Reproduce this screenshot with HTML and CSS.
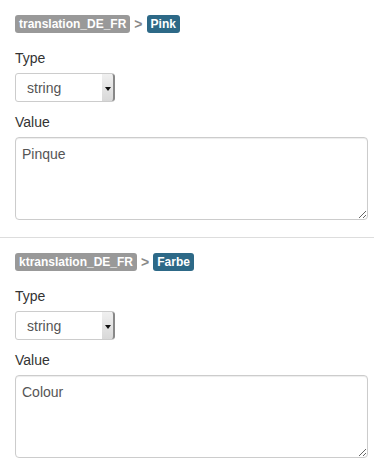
FILE: index.html
```html
<!DOCTYPE html>
<html lang="en">
<head>
<meta charset="UTF-8" />
<meta name="viewport" content="width=device-width, initial-scale=1" />
<title>Translations</title>
<link rel="stylesheet" href="styles.css">
</head>
<body>
<div class="entry">
  <div class="crumbs">
    <span class="tag tag-grey">translation_DE_FR</span>
    <span class="sep">&gt;</span>
    <span class="tag tag-blue">Pink</span>
  </div>

  <label class="field-label" for="type1">Type</label>
  <div class="select-wrap">
    <select id="type1" class="type-select">
      <option>string</option>
    </select>
    <span class="select-btn"><span class="caret"></span></span>
  </div>

  <label class="field-label" for="value1">Value</label>
  <textarea id="value1" class="value-box">Pinque</textarea>
</div>

<hr class="divider">

<div class="entry">
  <div class="crumbs">
    <span class="tag tag-grey">ktranslation_DE_FR</span>
    <span class="sep">&gt;</span>
    <span class="tag tag-blue">Farbe</span>
  </div>

  <label class="field-label" for="type2">Type</label>
  <div class="select-wrap">
    <select id="type2" class="type-select">
      <option>string</option>
    </select>
    <span class="select-btn"><span class="caret"></span></span>
  </div>

  <label class="field-label" for="value2">Value</label>
  <textarea id="value2" class="value-box">Colour</textarea>
</div>
</body>
</html>
```

FILE: styles.css
```css
body {
  margin: 0;
  font-family: "Liberation Sans", Arial, sans-serif;
  font-size: 14px;
  line-height: 20px;
  color: #333;
  background: #fff;
}
.entry {
  padding: 15px 15px 0;
}
.crumbs {
  display: flex;
  align-items: center;
  gap: 4px;
  height: 18px;
  margin-bottom: 15px;
}
.tag {
  display: inline-block;
  height: 18px;
  line-height: 18px;
  padding: 0 4px;
  font-size: 12px;
  font-weight: bold;
  color: #fff;
  border-radius: 3px;
}
.tag-grey {
  background: #999;
}
.tag-blue {
  background: #2d6987;
}
.sep {
  color: #888;
  font-size: 14px;
  font-weight: bold;
}
.field-label {
  display: block;
  margin-bottom: 5px;
}
.select-wrap {
  position: relative;
  width: 100px;
  height: 29px;
  margin-bottom: 10px;
}
.type-select {
  appearance: none;
  -webkit-appearance: none;
  width: 100%;
  height: 100%;
  margin: 0;
  padding: 0 0 0 11px;
  font-family: inherit;
  font-size: 14px;
  color: #555;
  background: #fff;
  border: 1px solid #ccc;
  border-radius: 3px;
  outline: none;
}
.select-btn {
  position: absolute;
  top: 1px;
  right: 0;
  bottom: 1px;
  width: 13px;
  background: linear-gradient(#f0f0f0, #d8d8d8);
  border-right: 2px solid #888;
  border-radius: 0 3px 3px 0;
  box-sizing: border-box;
  display: flex;
  align-items: center;
  justify-content: center;
}
.caret {
  width: 0;
  height: 0;
  border-left: 3px solid transparent;
  border-right: 3px solid transparent;
  border-top: 4px solid #111;
  margin-top: 2px;
}
.value-box {
  display: block;
  box-sizing: border-box;
  width: 353px;
  height: 83px;
  margin: 0;
  padding: 6px 6px;
  font-family: inherit;
  font-size: 14px;
  line-height: 20px;
  color: #555;
  border: 1px solid #ccc;
  border-radius: 4px;
  box-shadow: inset 0 1px 1px rgba(0,0,0,0.075);
  resize: vertical;
  outline: none;
}
.divider {
  margin: 17px 0 0;
  border: 0;
  border-top: 1px solid #ddd;
}
```
